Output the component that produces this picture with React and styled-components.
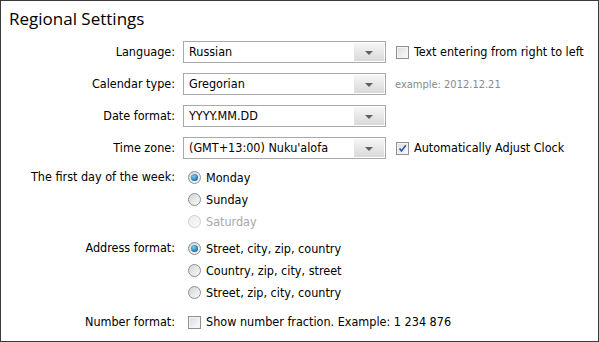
import React from "react";
import styled, { createGlobalStyle } from "styled-components";

const Global = createGlobalStyle`
  html, body { margin: 0; padding: 0; background: #fff; }
  body { font-family: "DejaVu Sans Condensed", "DejaVu Sans", sans-serif; font-size: 12.5px; color: #000; }
`;

const Frame = styled.div`
  width: 599px;
  height: 342px;
  box-sizing: border-box;
  border: 1px solid #3a3a3a;
  padding: 7px 0 0 8px;
  display: flex;
  flex-direction: column;
`;

const Title = styled.h1`
  margin: 0 0 12px 0;
  font-family: "Open Sans", "DejaVu Sans", sans-serif;
  font-weight: 400;
  font-size: 17px;
  line-height: 21px;
  color: #000;
`;

const Row = styled.div`
  display: flex;
  align-items: flex-start;
  margin-top: ${(p) => p.$mt || 0}px;
`;

const Label = styled.div`
  width: 166px;
  flex: none;
  text-align: right;
  line-height: 22px;
  margin-right: 8px;
  white-space: nowrap;
`;

const Controls = styled.div`
  display: flex;
  flex-direction: ${(p) => (p.$column ? "column" : "row")};
  align-items: ${(p) => (p.$column ? "flex-start" : "center")};
`;

const Select = styled.div`
  width: 203px;
  height: 22px;
  box-sizing: border-box;
  border: 1px solid #a9a9a9;
  display: flex;
  align-items: stretch;
  background: #fff;
`;

const SelectValue = styled.div`
  flex: 1;
  padding-left: 5px;
  line-height: 20px;
  white-space: nowrap;
`;

const SelectButton = styled.div`
  width: 30px;
  margin: 1px;
  background: linear-gradient(#f6f6f6, #d9d9d9);
  display: flex;
  align-items: center;
  justify-content: center;
`;

const Arrow = styled.div`
  width: 0;
  height: 0;
  border-left: 4px solid transparent;
  border-right: 4px solid transparent;
  border-top: 4px solid #606060;
  margin-top: 1px;
`;

const Box = styled.span`
  width: 13px;
  height: 13px;
  box-sizing: border-box;
  border: 1px solid #8f8f8f;
  background: linear-gradient(135deg, #dcdcdc, #fbfbfb);
  box-shadow: inset 0 0 0 1px #f4f4f4;
  display: inline-flex;
  align-items: center;
  justify-content: center;
  flex: none;
`;

const CheckWrap = styled.label`
  display: flex;
  align-items: center;
  gap: 5px;
  margin-left: ${(p) => p.$ml || 0}px;
  line-height: 22px;
  white-space: nowrap;
`;

const Hint = styled.span`
  margin-left: 9px;
  font-size: 11px;
  color: #8a8a8a;
  white-space: nowrap;
`;

const RadioLine = styled.label`
  display: flex;
  align-items: center;
  gap: 5px;
  height: 22px;
  margin-left: 5px;
  color: ${(p) => (p.$disabled ? "#a8a8a8" : "#000")};
  white-space: nowrap;
`;

const RadioCircle = styled.span`
  width: 13px;
  height: 13px;
  box-sizing: border-box;
  border-radius: 50%;
  border: 1px solid ${(p) => (p.$disabled ? "#d0d0d0" : "#8e8e8e")};
  background: ${(p) =>
    p.$disabled
      ? "linear-gradient(135deg, #ececec, #fafafa)"
      : "linear-gradient(135deg, #d4d4d4, #fafafa)"};
  display: inline-flex;
  align-items: center;
  justify-content: center;
  flex: none;
`;

const Dot = styled.span`
  width: 7px;
  height: 7px;
  border-radius: 50%;
  background: radial-gradient(circle at 40% 35%, #7fd0f5, #1a6fa8 70%, #0c4f80);
`;

const Check = ({ checked, children, ml }) => (
  <CheckWrap $ml={ml}>
    <Box>
      {checked && (
        <svg width="9" height="9" viewBox="0 0 9 9">
          <path d="M1.5 4.5 L3.5 7 L7.8 1.2" fill="none" stroke="#2a55a8" strokeWidth="1.6" />
        </svg>
      )}
    </Box>
    {children}
  </CheckWrap>
);

const Radio = ({ checked, disabled, children }) => (
  <RadioLine $disabled={disabled}>
    <RadioCircle $disabled={disabled}>{checked && <Dot />}</RadioCircle>
    {children}
  </RadioLine>
);

const Dropdown = ({ value }) => (
  <Select>
    <SelectValue>{value}</SelectValue>
    <SelectButton>
      <Arrow />
    </SelectButton>
  </Select>
);

export default function App() {
  return (
    <>
      <Global />
      <Frame>
        <Title>Regional Settings</Title>
        <Row>
          <Label>Language:</Label>
          <Controls>
            <Dropdown value="Russian" />
            <Check ml={10}>Text entering from right to left</Check>
          </Controls>
        </Row>
        <Row $mt={10}>
          <Label>Calendar type:</Label>
          <Controls>
            <Dropdown value="Gregorian" />
            <Hint>example: 2012.12.21</Hint>
          </Controls>
        </Row>
        <Row $mt={10}>
          <Label>Date format:</Label>
          <Controls>
            <Dropdown value="YYYY.MM.DD" />
          </Controls>
        </Row>
        <Row $mt={10}>
          <Label>Time zone:</Label>
          <Controls>
            <Dropdown value="(GMT+13:00) Nuku'alofa" />
            <Check ml={10} checked>Automatically Adjust Clock</Check>
          </Controls>
        </Row>
        <Row $mt={7}>
          <Label>The first day of the week:</Label>
          <Controls $column>
            <Radio checked>Monday</Radio>
            <Radio>Sunday</Radio>
            <Radio disabled>Saturday</Radio>
          </Controls>
        </Row>
        <Row $mt={5}>
          <Label>Address format:</Label>
          <Controls $column>
            <Radio checked>Street, city, zip, country</Radio>
            <Radio>Country, zip, city, street</Radio>
            <Radio>Street, zip, city, country</Radio>
          </Controls>
        </Row>
        <Row $mt={8}>
          <Label>Number format:</Label>
          <Controls>
            <Check ml={5}>Show number fraction. Example: 1 234 876</Check>
          </Controls>
        </Row>
      </Frame>
    </>
  );
}
